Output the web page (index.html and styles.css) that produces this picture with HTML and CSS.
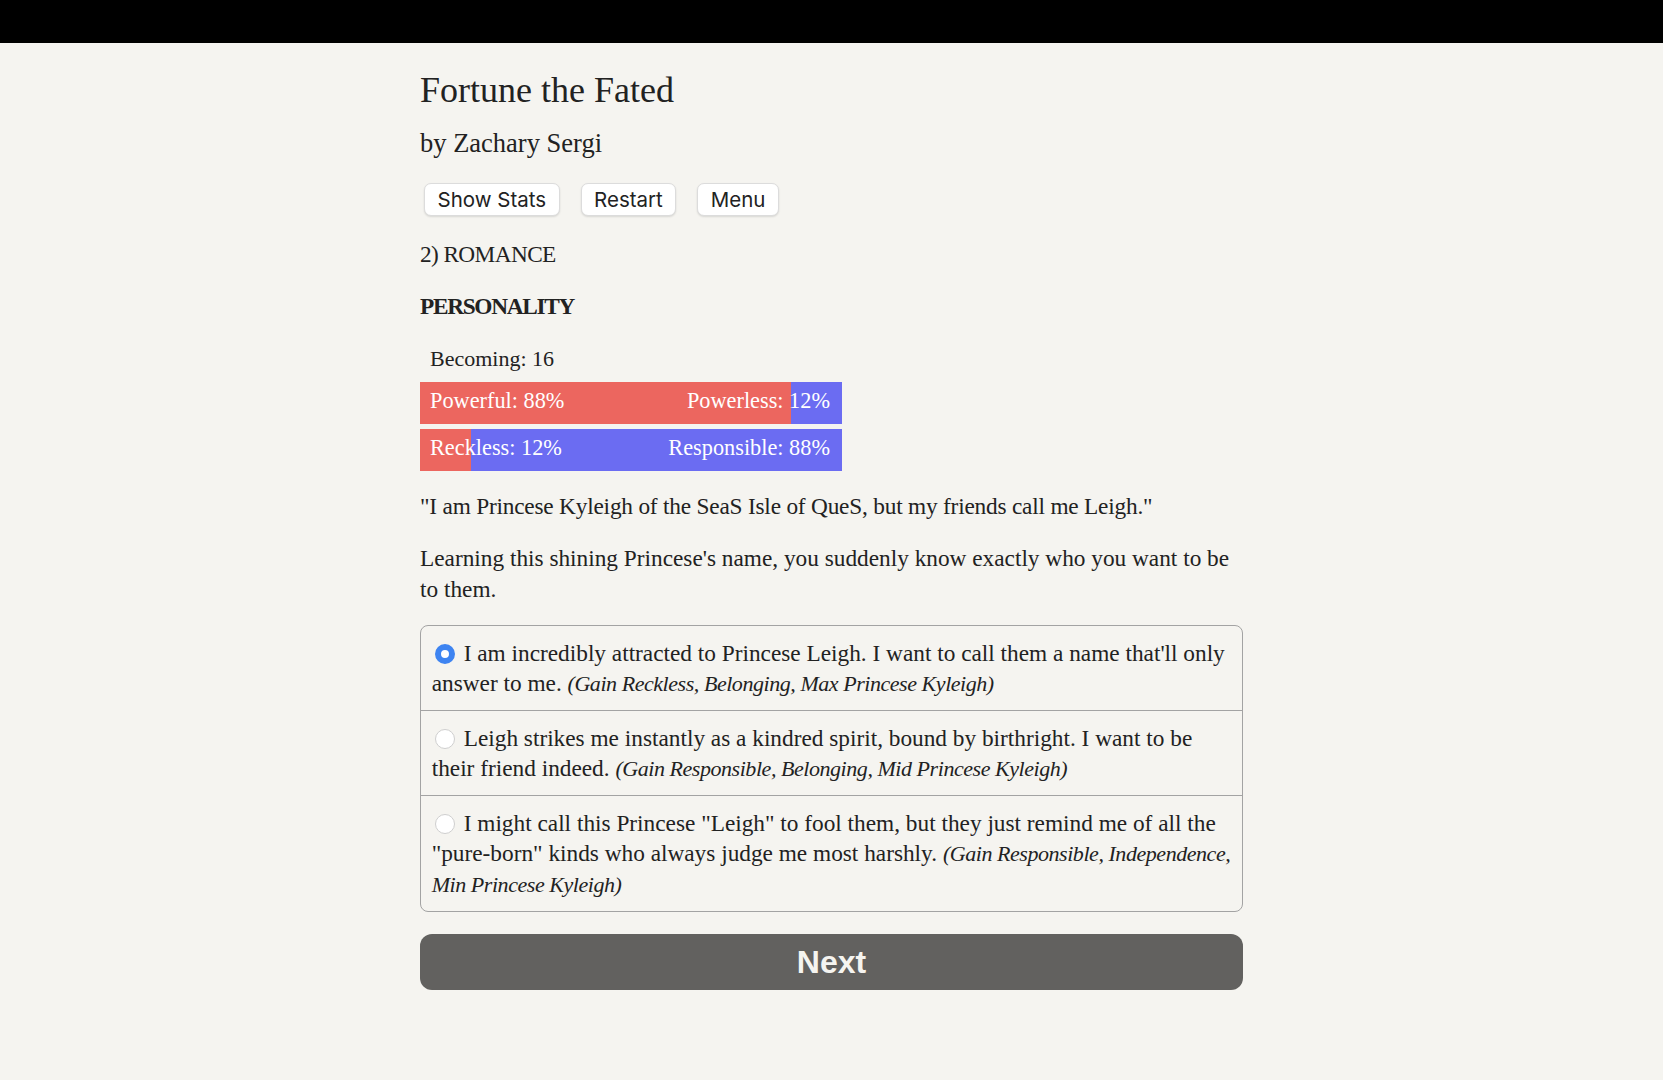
FILE: index.html
```html
<!DOCTYPE html>
<html lang="en">
<head>
<meta charset="utf-8">
<title>Fortune the Fated</title>
<link rel="stylesheet" href="styles.css">
</head>
<body>
<div class="topbar"></div>
<main class="page">
  <h1 class="title">Fortune the Fated</h1>
  <h2 class="author">by Zachary Sergi</h2>
  <div class="toolbar">
    <button class="tbtn">Show Stats</button>
    <button class="tbtn">Restart</button>
    <button class="tbtn">Menu</button>
  </div>
  <p class="text chapter">2) ROMANCE</p>
  <p class="text heading">PERSONALITY</p>
  <p class="text becoming">Becoming: 16</p>
  <div class="bars">
    <div class="bar">
      <div class="fill" style="width:88%"></div>
      <div class="labels"><span>Powerful: 88%</span><span>Powerless: 12%</span></div>
    </div>
    <div class="bar">
      <div class="fill" style="width:12%"></div>
      <div class="labels"><span>Reckless: 12%</span><span>Responsible: 88%</span></div>
    </div>
  </div>
  <p class="text quote">"I am Princese Kyleigh of the SeaS Isle of QueS, but my friends call me Leigh."</p>
  <p class="text learning">Learning this shining Princese's name, you suddenly know exactly who you want to be to them.</p>
  <div class="choices">
    <label class="choice"><span class="radio checked"></span>I am incredibly attracted to Princese Leigh. I want to call them a name that'll only answer to me. <i>(Gain Reckless, Belonging, Max Princese Kyleigh)</i></label>
    <label class="choice"><span class="radio"></span>Leigh strikes me instantly as a kindred spirit, bound by birthright. I want to be their friend indeed. <i>(Gain Responsible, Belonging, Mid Princese Kyleigh)</i></label>
    <label class="choice"><span class="radio"></span>I might call this Princese "Leigh" to fool them, but they just remind me of all the "pure-born" kinds who always judge me most harshly. <i>(Gain Responsible, Independence, Min Princese Kyleigh)</i></label>
  </div>
  <button class="next">Next</button>
</main>
</body>
</html>
```

FILE: styles.css
```css
html, body {
  margin: 0;
  padding: 0;
  background: #f5f4f0;
}
body {
  font-family: "Liberation Serif", "Times New Roman", serif;
  color: #222;
  height: 1080px;
  overflow: hidden;
}
.topbar {
  height: 43px;
  background: #000;
}
.page {
  width: 823px;
  margin: 0 auto;
  padding-top: 26px;
  display: flex;
  flex-direction: column;
}
.title {
  margin: 0;
  font-weight: normal;
  font-size: 36px;
  line-height: 43px;
  color: #222;
}
.author {
  margin: 15px 0 0;
  font-weight: normal;
  font-size: 26.5px;
  line-height: 33px;
  color: #222;
}
.toolbar {
  margin-top: 23px;
  padding-left: 4px;
  display: flex;
  gap: 21px;
}
.tbtn {
  height: 33px;
  padding: 0 12.5px;
  font-family: "Inter", "Liberation Sans", sans-serif;
  font-size: 20.5px;
  color: #222;
  background: #fff;
  border: 1px solid #dcdcdc;
  border-radius: 7px;
  box-shadow: 0 1px 2px rgba(0,0,0,0.12);
}
.text {
  margin: 0;
  font-size: 23.3px;
  line-height: 30.5px;
}
.chapter {
  margin-top: 23px;
  letter-spacing: -0.6px;
}
.heading {
  margin-top: 21px;
  font-weight: bold;
  letter-spacing: -1.3px;
}
.becoming {
  margin-top: 22.5px;
  margin-left: 10px;
  font-size: 22px;
}
.bars {
  margin-top: 8px;
  display: flex;
  flex-direction: column;
  gap: 5.5px;
  width: 422px;
}
.bar {
  display: grid;
  height: 41.5px;
  background: #6b6cf2;
}
.fill {
  grid-area: 1 / 1;
  background: #ec665f;
  height: 100%;
}
.labels {
  grid-area: 1 / 1;
  display: flex;
  justify-content: space-between;
  padding: 1px 12px 0 10px;
  font-size: 22.3px;
  line-height: 36px;
  color: #fff;
}
.quote {
  margin-top: 20.5px;
  letter-spacing: -0.2px;
}
.learning {
  margin-top: 21.5px;
}
.choices {
  margin-top: 21px;
  border: 1px solid #a3a3a3;
  border-radius: 8px;
  display: flex;
  flex-direction: column;
}
.choice {
  display: block;
  padding: 11.5px 10.7px 11.5px 10.7px;
  font-size: 23.3px;
  line-height: 30.5px;
  color: #222;
}
.choice i {
  font-size: 22px;
  line-height: 1;
  letter-spacing: -0.45px;
}
.choice + .choice {
  border-top: 1px solid #a3a3a3;
}
.radio {
  display: inline-block;
  box-sizing: border-box;
  width: 20px;
  height: 20px;
  margin: 0 9px 0 3px;
  border-radius: 50%;
  border: 1px solid #cfcfcf;
  background: #fff;
  vertical-align: -3.5px;
}
.radio.checked {
  border: 6.5px solid #3e84f1;
  background: #fff;
}
.next {
  margin-top: 22.5px;
  height: 56px;
  border: none;
  border-radius: 12px;
  background: #62615f;
  color: #f5f4f0;
  font-family: "Liberation Sans", Arial, sans-serif;
  font-weight: bold;
  font-size: 32px;
}
```
